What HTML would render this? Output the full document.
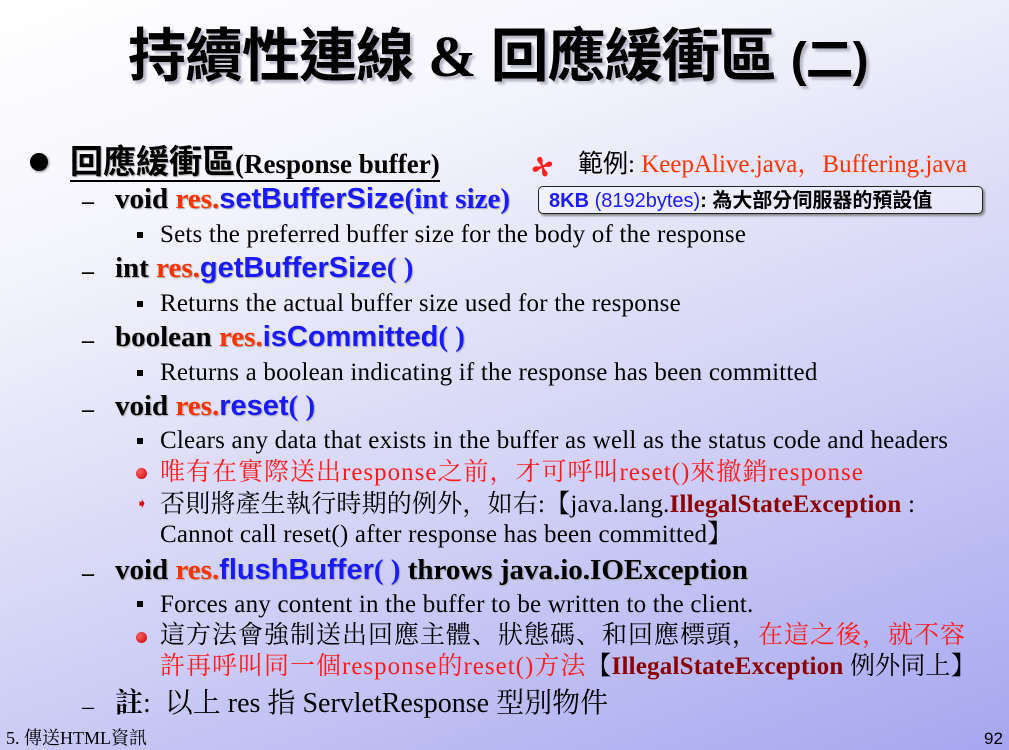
<!DOCTYPE html>
<html><head><meta charset="utf-8"><style>
html,body{margin:0;padding:0}
body{width:1009px;height:750px;overflow:hidden;position:relative;
background:linear-gradient(160deg,#ffffff 0%,#f4f4fc 25%,#d2d2f6 60%,#a6a6f0 100%);
font-family:"Liberation Serif","Noto Serif CJK SC","Noto Sans CJK TC",serif;color:#000}
.a{position:absolute;white-space:nowrap;line-height:1}
.t{font-family:"Liberation Sans","Noto Sans CJK TC",sans-serif;font-weight:bold;font-size:58px;text-shadow:3px 3px 2px #b8b8c8;letter-spacing:-1px}
.b{font-weight:bold;font-size:29px}
.r{color:#ff3300}
.bl{color:#1a1aff;font-family:"Liberation Sans",sans-serif;font-weight:bold}
.s{font-size:25px;letter-spacing:0.2px}
.sq{position:absolute;width:6px;height:6px;background:#000}
.dash{position:absolute;font-size:24px;font-weight:bold}
.rd{color:#ff1a1a}
.dr{color:#8b0000;font-weight:bold}
.dot{position:absolute;width:11px;height:11px;border-radius:50%;background:radial-gradient(circle at 35% 35%,#ff6060,#c00000)}
.sh{text-shadow:1px 1px 1px #aaa}
.c{letter-spacing:1px}
</style></head><body>
<div class="a t" style="left:128px;top:28px">持續性連線 <span style="font-family:'Liberation Serif',serif">&amp;</span> 回應緩衝區 <span style="font-size:48px">(二)</span></div>

<div style="position:absolute;left:30px;top:153px;width:18px;height:18px;border-radius:50%;background:#000;box-shadow:1px 1px 2px #888"></div>
<div class="a" style="left:70px;top:145px;font-weight:bold;font-size:27px;border-bottom:2px solid #000;padding-bottom:2px"><span style="font-family:'Liberation Sans','Noto Sans CJK TC',sans-serif;font-size:33px;text-shadow:1px 1px 1px #aaa">回應緩衝區</span>(Response buffer)</div>

<div class="a" style="left:578px;top:152px;font-size:25px"><span style="font-family:'Liberation Sans','Noto Sans CJK TC',sans-serif">範例</span>: <span class="r">KeepAlive.java，Buffering.java</span></div>
<div class="a" style="left:532px;top:155px;color:#ff2020;font-size:26px;font-weight:bold;transform:rotate(-20deg)">✢</div>

<div class="dash" style="left:82px;top:189px">–</div>
<div class="a b sh" style="left:115px;top:185px">void <span class="r">res.</span><span class="bl">setBufferSize</span><span style="color:#1a1aff">(int size)</span></div>
<div class="a" style="left:538px;top:186px;width:445px;height:28px;border:1.5px solid #222;border-radius:5px;box-shadow:2px 2px 2px #888;background:rgba(255,255,255,.35);font-family:'Liberation Sans','Noto Sans CJK TC',sans-serif;font-size:20px;line-height:28px;padding-left:10px;box-sizing:border-box"><b style="color:#1a1aff">8KB</b> <span style="color:#1a1aff">(8192bytes)</span><b>: 為大部分伺服器的預設值</b></div>

<div class="sq" style="left:137px;top:232px"></div>
<div class="a s" style="left:160px;top:222px">Sets the preferred buffer size for the body of the response</div>

<div class="dash" style="left:82px;top:259px">–</div>
<div class="a b sh" style="left:115px;top:254px">int <span class="r">res.</span><span class="bl">getBufferSize</span><span style="color:#1a1aff">( )</span></div>
<div class="sq" style="left:137px;top:301px"></div>
<div class="a s" style="left:160px;top:291px">Returns the actual buffer size used for the response</div>

<div class="dash" style="left:82px;top:328px">–</div>
<div class="a b sh" style="left:115px;top:323px">boolean <span class="r">res.</span><span class="bl">isCommitted</span><span style="color:#1a1aff">( )</span></div>
<div class="sq" style="left:137px;top:370px"></div>
<div class="a s" style="left:160px;top:360px">Returns a boolean indicating if the response has been committed</div>

<div class="dash" style="left:82px;top:397px">–</div>
<div class="a b sh" style="left:115px;top:392px">void <span class="r">res.</span><span class="bl">reset</span><span style="color:#1a1aff">( )</span></div>
<div class="sq" style="left:137px;top:438px"></div>
<div class="a s" style="left:160px;top:428px">Clears any data that exists in the buffer as well as the status code and headers</div>
<div class="dot" style="left:136px;top:468px"></div>
<div class="a s rd c" style="left:160px;top:460px">唯有在實際送出response之前，才可呼叫reset()來撤銷response</div>
<div class="a" style="left:136px;top:498px;color:#d00;font-size:14px">➧</div>
<div class="a s" style="left:160px;top:492px">否則將產生執行時期的例外，如右:【java.lang.<span class="dr">IllegalStateException</span> :</div>
<div class="a s" style="left:160px;top:522px">Cannot call reset() after response has been committed】</div>

<div class="dash" style="left:82px;top:561px">–</div>
<div class="a b sh" style="left:115px;top:556px">void <span class="r">res.</span><span class="bl">flushBuffer</span><span style="color:#1a1aff">( )</span> throws java.io.IOException</div>
<div class="sq" style="left:137px;top:601px"></div>
<div class="a s" style="left:160px;top:592px">Forces any content in the buffer to be written to the client.</div>
<div class="dot" style="left:136px;top:632px"></div>
<div class="a s c" style="left:160px;top:623px">這方法會強制送出回應主體、狀態碼、和回應標頭，<span class="rd">在這之後，就不容</span></div>
<div class="a s" style="left:160px;top:654px"><span class="rd c">許再呼叫同一個response的reset()方法</span>【<span class="dr">IllegalStateException</span> 例外同上】</div>

<div class="dash" style="left:82px;top:694px;font-weight:normal">–</div>
<div class="a" style="left:115px;top:690px;font-size:28px"><b>註</b>:&nbsp; 以上 res 指 ServletResponse 型別物件</div>

<div class="a" style="left:6px;top:729px;font-size:18px">5. 傳送HTML資訊</div>
<div class="a" style="left:984px;top:730px;font-size:17px;font-family:'Liberation Sans',sans-serif">92</div>
</body></html>
